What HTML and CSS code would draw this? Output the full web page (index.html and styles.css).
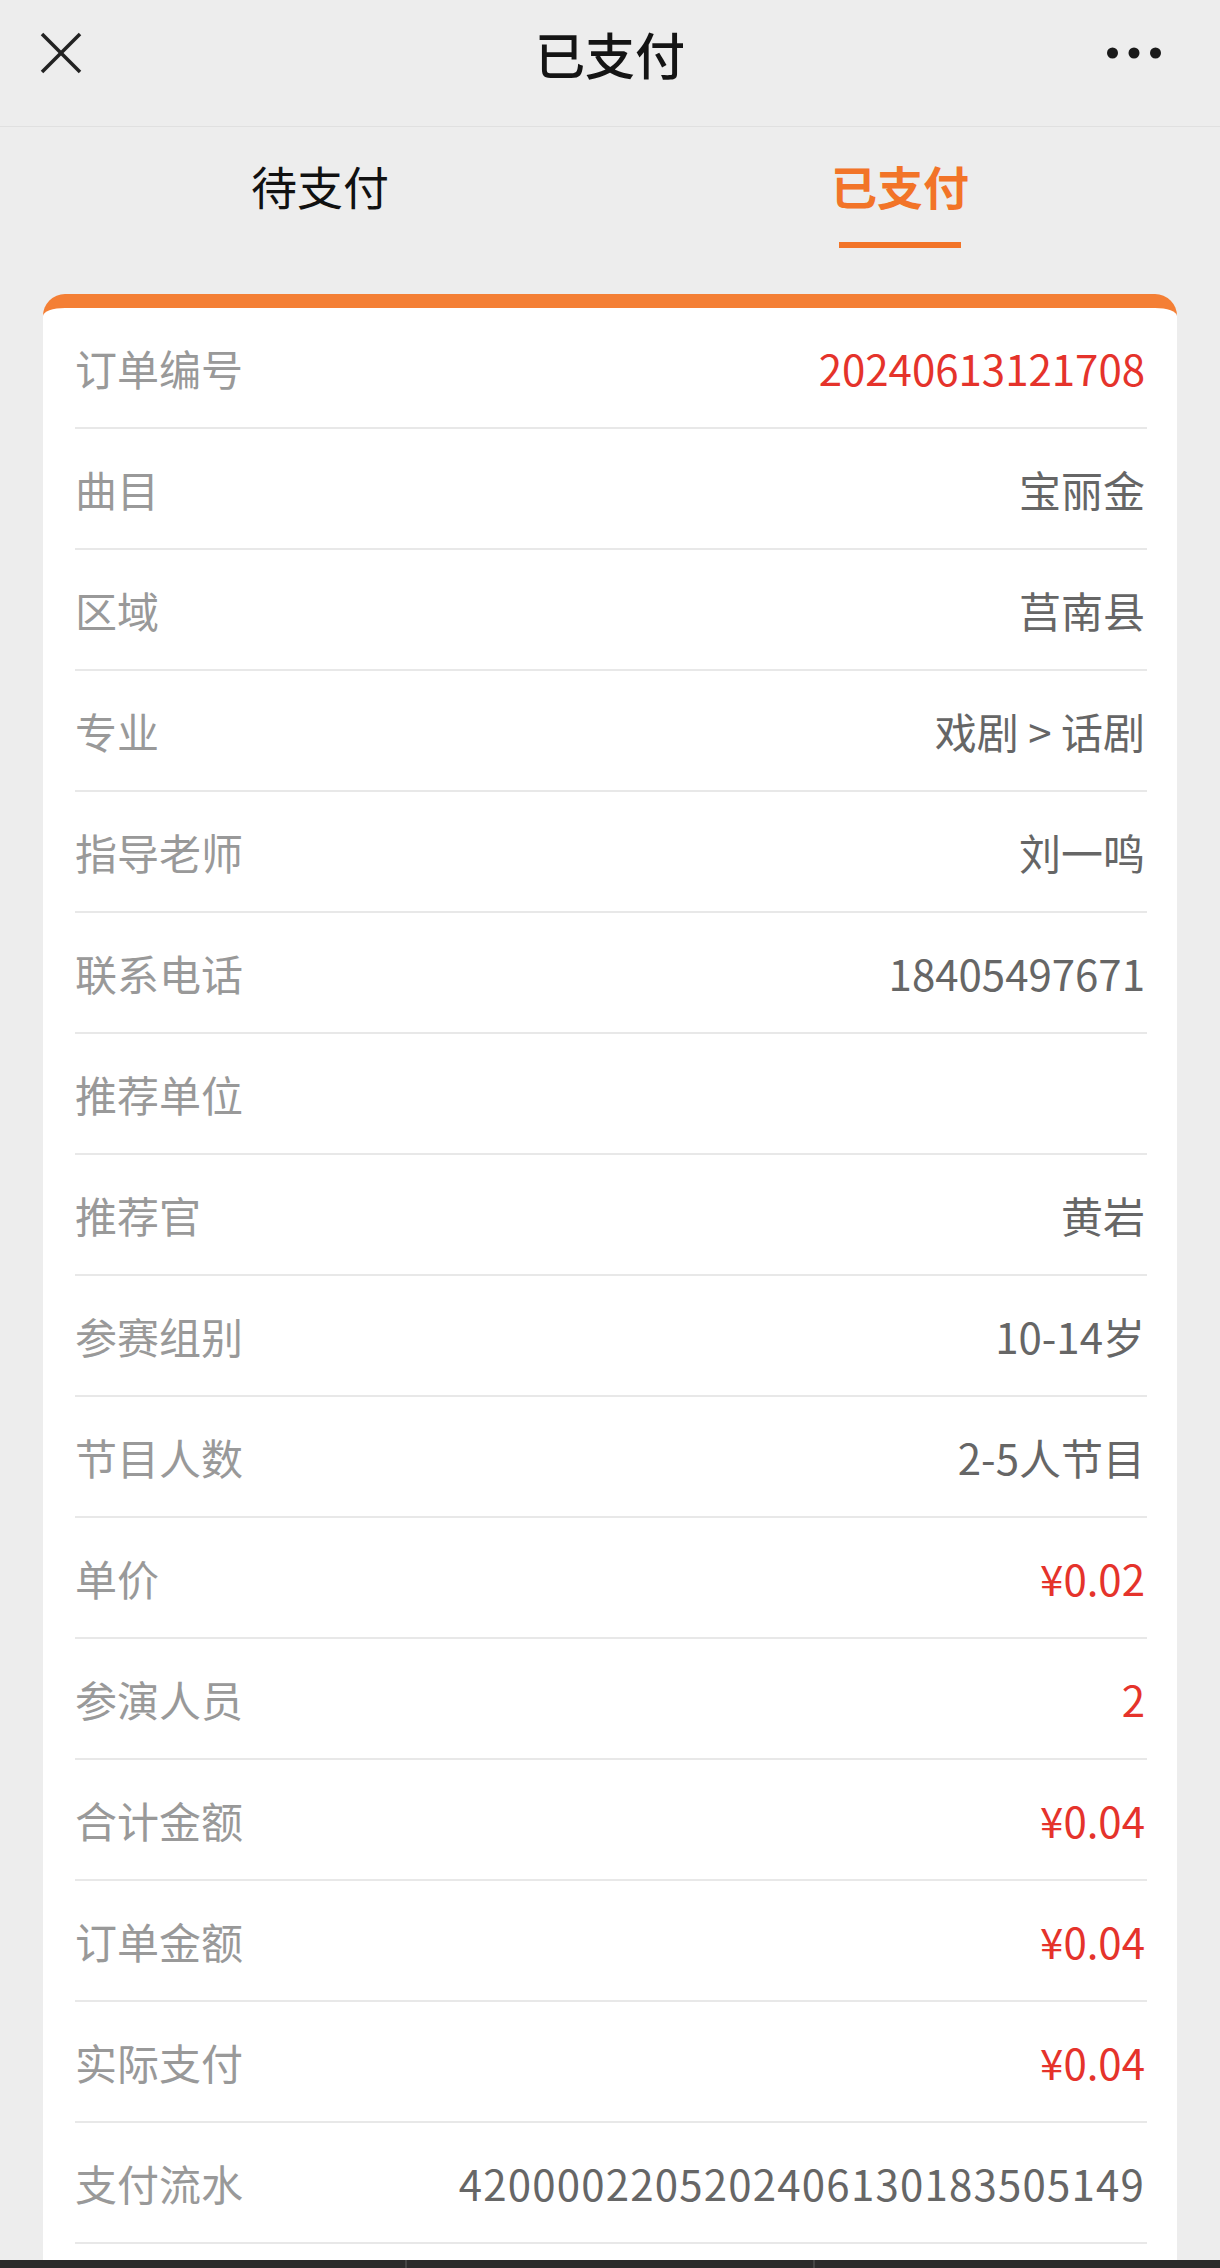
FILE: index.html
```html
<!DOCTYPE html>
<html lang="zh-CN">
<head>
<meta charset="UTF-8" />
<meta name="viewport" content="width=device-width, initial-scale=1" />
<title>已支付</title>
<link rel="stylesheet" href="styles.css">
</head>
<body>

<header class="topbar">
  <svg class="close" width="42" height="42" viewBox="0 0 42 42">
    <line x1="2" y1="2" x2="40" y2="40" />
    <line x1="40" y1="2" x2="2" y2="40" />
  </svg>
  <div class="title">已支付</div>
  <svg class="more" width="54" height="12" viewBox="0 0 54 12">
    <circle cx="5.5" cy="6" r="5.5" />
    <circle cx="27" cy="6" r="5.5" />
    <circle cx="48.5" cy="6" r="5.5" />
  </svg>
</header>

<nav class="tabs">
  <div class="tab">待支付</div>
  <div class="tab active">已支付</div>
</nav>

<section class="card">
  <div class="row"><span class="label">订单编号</span><span class="value red">20240613121708</span></div>
  <div class="row"><span class="label">曲目</span><span class="value">宝丽金</span></div>
  <div class="row"><span class="label">区域</span><span class="value">莒南县</span></div>
  <div class="row"><span class="label">专业</span><span class="value">戏剧 &gt; 话剧</span></div>
  <div class="row"><span class="label">指导老师</span><span class="value">刘一鸣</span></div>
  <div class="row"><span class="label">联系电话</span><span class="value">18405497671</span></div>
  <div class="row"><span class="label">推荐单位</span><span class="value"></span></div>
  <div class="row"><span class="label">推荐官</span><span class="value">黄岩</span></div>
  <div class="row"><span class="label">参赛组别</span><span class="value">10-14岁</span></div>
  <div class="row"><span class="label">节目人数</span><span class="value">2-5人节目</span></div>
  <div class="row"><span class="label">单价</span><span class="value red">¥0.02</span></div>
  <div class="row"><span class="label">参演人员</span><span class="value red">2</span></div>
  <div class="row"><span class="label">合计金额</span><span class="value red">¥0.04</span></div>
  <div class="row"><span class="label">订单金额</span><span class="value red">¥0.04</span></div>
  <div class="row"><span class="label">实际支付</span><span class="value red">¥0.04</span></div>
  <div class="row"><span class="label">支付流水</span><span class="value serial">4200002205202406130183505149</span></div>
</section>

<footer class="bottombar">
  <div class="seg"></div>
  <div class="seg"></div>
  <div class="seg"></div>
</footer>

</body>
</html>
```

FILE: styles.css
```css
body {
  background-color: #ededed;
  color: #111;
  font-family: "Noto Sans CJK SC", "Noto Sans", sans-serif;
  margin: 0;
  padding: 0;
}
.topbar {
  box-sizing: border-box;
  height: 127px;
  padding: 0 40px 21px 40px;
  display: grid;
  grid-template-columns: 1fr auto 1fr;
  align-items: center;
  border-bottom: 1px solid #e0e0e0;
}
.topbar .close {
  justify-self: start;
  stroke: #222;
  stroke-width: 3.6;
}
.topbar .title {
  font-size: 50px;
  font-weight: 500;
  line-height: 60px;
  color: #141414;
}
.topbar .more {
  justify-self: end;
  margin-right: 19px;
  fill: #1a1a1a;
}
.tabs {
  display: flex;
  padding: 0 30px;
  margin-bottom: 46px;
}
.tab {
  flex: 1;
  display: flex;
  flex-direction: column;
  align-items: center;
  padding-top: 26px;
  font-size: 46px;
  line-height: 64px;
  color: #111;
}
.tab::after {
  content: "";
  display: block;
  width: 122px;
  height: 6px;
  margin-top: 25px;
  background: transparent;
}
.tab.active {
  color: #f27428;
  font-weight: 700;
}
.tab.active::after {
  background: #f27428;
}
.card {
  margin: 0 43px;
  background: #fff;
  border-top: 14px solid #f47f35;
  border-radius: 22px 22px 0 0;
  padding: 0 30px 16px 32px;
}
.row {
  height: 119px;
  display: flex;
  align-items: center;
  justify-content: space-between;
  border-bottom: 2px solid #e8e8e8;
  font-size: 42px;
}
.label {
  color: #999;
}
.value {
  color: #666;
  padding-right: 2px;
}
.value.red {
  color: #e5332b;
}
.value.serial {
  letter-spacing: 1.2px;
}
.bottombar {
  display: flex;
  height: 60px;
  background: #2b2b2b;
}
.bottombar .seg {
  flex: 1;
  border-right: 2px solid #444;
}
.bottombar .seg:last-child {
  border-right: none;
}
```
